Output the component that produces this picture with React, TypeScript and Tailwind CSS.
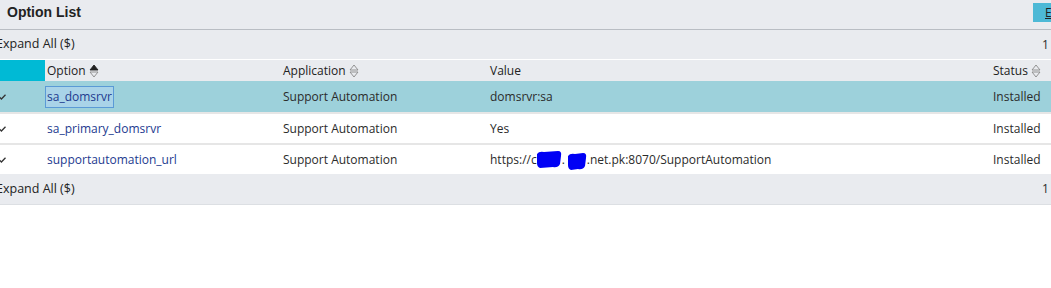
import React from 'react';

const cols = 'grid grid-cols-[45px_236px_207px_503px_1fr]';

function SortIcon({ active }: { active?: boolean }) {
  return (
    <svg width={10} height={14} viewBox="0 0 10 14" className="ml-[3px] inline-block">
      <path d="M5 1 L9 6 L1 6 Z" fill={active ? '#222' : 'none'} stroke={active ? '#222' : '#888'} strokeWidth={0.9} />
      <path d="M1 8 L9 8 L5 13 Z" fill="none" stroke="#888" strokeWidth={0.9} />
    </svg>
  );
}

function Check() {
  return (
    <svg width={7} height={6} viewBox="0 0 7 6" className="ml-[-1px]">
      <path d="M0.5 3.2 L2.4 5 L6.5 0.8" fill="none" stroke="#333" strokeWidth={1.3} />
    </svg>
  );
}

function Blob({ w }: { w: number }) {
  return (
    <svg width={w} height={19} viewBox={`0 0 ${w} 19`} className="inline-block align-middle">
      <path
        d={`M1 4 Q3 1 8 2 L${w - 4} 1 Q${w} 1 ${w - 1} 6 L${w - 2} 14 Q${w - 4} 18 ${w - 9} 17 L4 18 Q1 17 1 13 Z`}
        fill="#0000f5"
      />
    </svg>
  );
}

const rows = [
  { option: 'sa_domsrvr', app: 'Support Automation', value: 'domsrvr:sa', status: 'Installed', selected: true },
  { option: 'sa_primary_domsrvr', app: 'Support Automation', value: 'Yes', status: 'Installed' },
  { option: 'supportautomation_url', app: 'Support Automation', value: 'url', status: 'Installed' },
];

export default function App() {
  return (
    <div className="w-[1051px] h-[288px] overflow-hidden bg-white text-[12px] text-[#2b2b2b]" style={{ fontFamily: '"Open Sans", "Liberation Sans", sans-serif' }}>
      {/* title bar */}
      <div className="h-[30px] flex items-center justify-between bg-[#e9ebef] border-b border-[#b9bdc3]">
        <span className="pl-[7px] pb-[4px] text-[14px] font-bold text-[#222]" style={{ fontFamily: '"Liberation Sans", sans-serif' }}>Option List</span>
        <div className="shrink-0 self-start mt-[3px] h-[19px] w-[18px] overflow-hidden bg-[#4db9d6] pl-[12px] text-[#222] underline leading-[19px]">E</div>
      </div>

      {/* expand row */}
      <div className="h-[30px] flex items-center justify-between bg-[#e9ebef] border-b border-white">
        <span className="ml-[-4px] text-[12.5px] text-[#222]">Expand All ($)</span>
        <span className="mr-[1px] w-[8px] overflow-hidden">1</span>
      </div>

      {/* header */}
      <div className={`${cols} h-[21px] bg-[#e9ebef] items-center`}>
        <div className="h-full bg-[#00bad5]" />
        <div className="pl-[2px] flex items-center text-[#222]">Option<SortIcon active /></div>
        <div className="pl-[2px] flex items-center text-[#222]">Application<SortIcon /></div>
        <div className="pl-[2px] text-[#222]">Value</div>
        <div className="pl-[2px] flex items-center text-[#222]">Status<SortIcon /></div>
      </div>

      {rows.map((r, i) => (
        <div
          key={r.option}
          className={`${cols} items-center ${r.selected ? 'h-[31px] bg-[#9dd1db]' : 'h-[31px] bg-white border-t-2 border-[#e6e6e6]'} ${i === 2 ? 'bg-[#fdfefe]' : ''}`}
        >
          <div className="pl-0"><Check /></div>
          <div className="pl-[2px]">
            <span className={`text-[#1d3a8f] ${r.selected ? 'inline-block outline outline-1 outline-[#5b9ad6] bg-[#a9d3e8] px-[1px] py-[1px] ml-[-1px]' : ''}`}>{r.option}</span>
          </div>
          <div className="pl-[2px]">{r.app}</div>
          <div className="pl-[2px] flex items-center whitespace-nowrap">
            {r.value === 'url' ? (
              <>
                <span>https://c</span>
                <span className="ml-[-1px]"><Blob w={26} /></span>
                <span>.</span>
                <span className="ml-[2px] mt-[3px]"><Blob w={20} /></span>
                <span>.net.pk:8070/SupportAutomation</span>
              </>
            ) : (
              r.value
            )}
          </div>
          <div className="pl-[2px]">{r.status}</div>
        </div>
      ))}

      {/* footer expand row */}
      <div className="h-[31px] flex items-center justify-between bg-[#e9ebef] border-b border-[#dcdfe3]">
        <span className="ml-[-4px] text-[12.5px] text-[#222]">Expand All ($)</span>
        <span className="mr-[1px] w-[8px] overflow-hidden">1</span>
      </div>
    </div>
  );
}
